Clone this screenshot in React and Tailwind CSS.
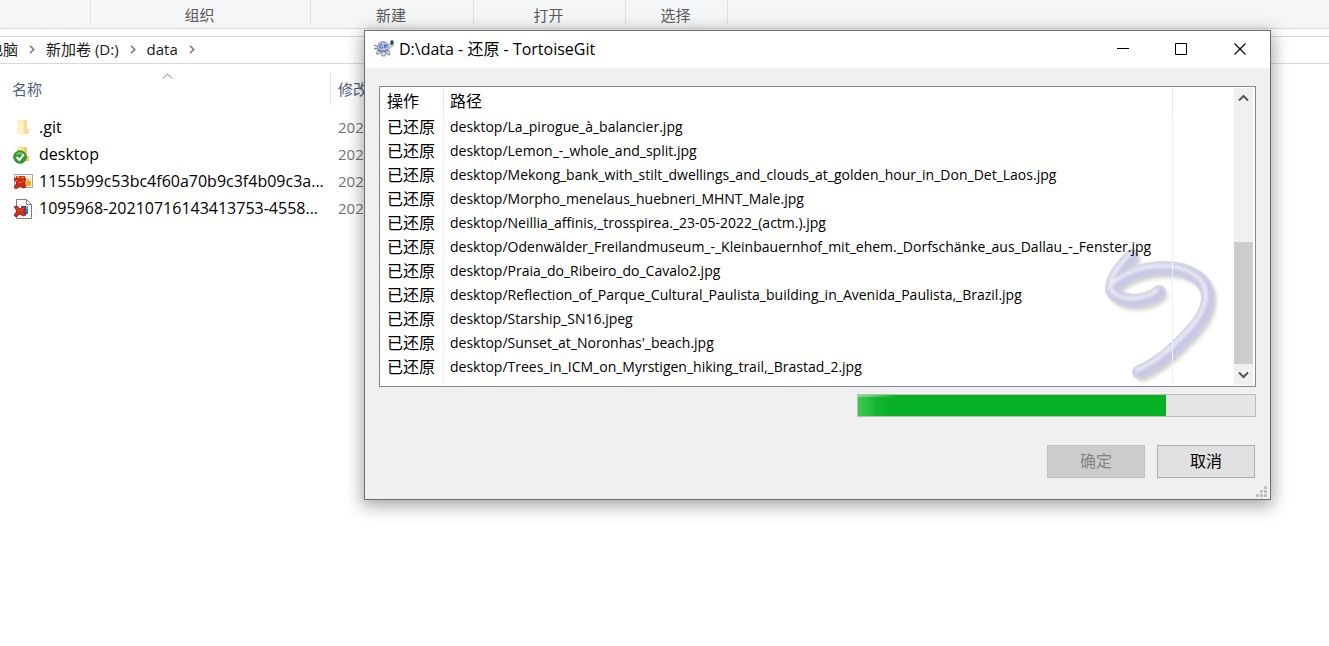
import React from "react";

const PATHS = [
  "desktop/La_pirogue_à_balancier.jpg",
  "desktop/Lemon_-_whole_and_split.jpg",
  "desktop/Mekong_bank_with_stilt_dwellings_and_clouds_at_golden_hour_in_Don_Det_Laos.jpg",
  "desktop/Morpho_menelaus_huebneri_MHNT_Male.jpg",
  "desktop/Neillia_affinis,_trosspirea._23-05-2022_(actm.).jpg",
  "desktop/Odenwälder_Freilandmuseum_-_Kleinbauernhof_mit_ehem._Dorfschänke_aus_Dallau_-_Fenster.jpg",
  "desktop/Praia_do_Ribeiro_do_Cavalo2.jpg",
  "desktop/Reflection_of_Parque_Cultural_Paulista_building_in_Avenida_Paulista,_Brazil.jpg",
  "desktop/Starship_SN16.jpeg",
  "desktop/Sunset_at_Noronhas'_beach.jpg",
  "desktop/Trees_in_ICM_on_Myrstigen_hiking_trail,_Brastad_2.jpg",
];

function Folder({ faded }) {
  return (
    <g opacity={faded ? 0.6 : 1}>
      <path d="M4 2h7v14H4z" fill="#f7d982" />
      <path d="M11 2h3v9h2v5h-5z" fill="#f3cb62" />
      <path d="M4 2l6 2v14l-6-2z" fill="#ffe9a8" />
    </g>
  );
}

function RedCross() {
  return (
    <g>
      <path d="M1 7l3-1 3 3 4-3 2 1-2 4 2 4-3 1-3-2-4 3-2-2 3-4z" fill="#d02a14" stroke="#9a170b" strokeWidth="0.8" />
      <path d="M3 8l4 3 4-3" fill="none" stroke="#ee6a4a" strokeWidth="0.8" />
    </g>
  );
}

function FileIcon({ kind }) {
  return (
    <svg width="20" height="20" viewBox="0 0 20 20" className="shrink-0" aria-hidden="true">
      {kind === "folder" && <Folder faded />}
      {kind === "synced" && (
        <g>
          <Folder />
          <circle cx="7" cy="12" r="6.3" fill="#2f9e31" stroke="#1f7d22" strokeWidth="0.8" />
          <path d="M2.500 10a5 5 0 0 1 9 0q-4.500-1.500-9 0z" fill="#7ccb72" />
          <path d="M3.500 12l2.800 3 4.500-5.500" fill="none" stroke="#fff" strokeWidth="2" />
        </g>
      )}
      {kind === "picture" && (
        <g>
          <path d="M1.500 2.500h18v13h-18z" fill="#fff" stroke="#a3a3a3" />
          <path d="M3 4h9v10H3z" fill="#e0341c" />
          <path d="M4 4h2v2H4zM9 5h2v2H9z" fill="#f7a13a" />
          <path d="M12 4h6v10h-6z" fill="#f9e8d2" />
          <path d="M12 14V8l1.500 2L15 6l1.500 4L18 8v6z" fill="#f5a80f" />
          <RedCross />
        </g>
      )}
      {kind === "document" && (
        <g>
          <path d="M3.500 .500h10l5 5v14h-15z" fill="#fff" stroke="#808080" />
          <path d="M13.500 .500v5h5" fill="none" stroke="#808080" />
          <path d="M8 7h7v8H8z" fill="#1b74d0" />
          <path d="M10 7h5v4z" fill="#63b3f0" />
          <g transform="translate(0 1)">
            <RedCross />
          </g>
        </g>
      )}
    </svg>
  );
}

function Tortoise() {
  return (
    <svg width="20" height="18" viewBox="0 0 20 18" className="shrink-0" aria-hidden="true">
      <path d="M0 5l5 2M0 8.500h5" stroke="#7d8795" strokeWidth="1.300" fill="none" />
      <path d="M4 10l-2 4h3l2-2 1 4h3l1-4 2 3h2l-1-5z" fill="#d3d5d9" stroke="#7b7f86" strokeWidth="0.800" />
      <ellipse cx="9" cy="6.500" rx="5.200" ry="5" fill="#a9bdf0" stroke="#8796c0" />
      <path d="M8 4.500H6.500L5.500 6l1 2h2V6.500M10.500 4.500V8M12 4v4M11 5.500h2.500" stroke="#4c64a6" strokeWidth="0.900" fill="none" />
      <path d="M4 10q5 3 10 0" stroke="#687184" strokeWidth="1.200" fill="none" />
      <path d="M14 5l2-2 3 1v2l-4 3z" fill="#c6ccd4" stroke="#8b929c" strokeWidth="0.500" />
      <path d="M16.500 .500H19.500v4h-3z" fill="#12435f" />
    </svg>
  );
}

function Crumb() {
  return (
    <svg width="6" height="9" viewBox="0 0 6 9" fill="none" stroke="#7a7a7a" strokeWidth="1.600" aria-hidden="true">
      <path d="M1 .800l3.700 3.700L1 8.200" />
    </svg>
  );
}

function RevertArrow() {
  return (
    <svg
      className="pointer-events-none absolute right-9 bottom-0"
      width="120"
      height="144"
      viewBox="0 0 120 144"
      fill="none"
      strokeLinecap="round"
      strokeLinejoin="round"
      aria-hidden="true"
    >
      <defs>
        <filter id="soft" x="-20%" y="-20%" width="140%" height="140%">
          <feGaussianBlur stdDeviation="2" />
        </filter>
        <filter id="shine" x="-20%" y="-20%" width="140%" height="140%">
          <feGaussianBlur stdDeviation="1.400" />
        </filter>
        <path
          id="revert-shape"
          d="M33 14C22 25 14 35 13 46C22 35 42 26 66 26C90 26 109 38 109 55C109 72 96 86 82 100C70 112 56 124 40 130M13 48C18 58 32 60 42 58Q54 56 60 50"
        />
      </defs>
      <use href="#revert-shape" transform="translate(3 4)" stroke="#cfcfca" strokeWidth="11" filter="url(#soft)" />
      <use href="#revert-shape" stroke="#d4d4ea" strokeWidth="14" />
      <use href="#revert-shape" transform="translate(1 1)" stroke="#c8c8e3" strokeWidth="10" filter="url(#shine)" />
      <use href="#revert-shape" transform="translate(-2 -2)" stroke="#f1f1f8" strokeWidth="3" filter="url(#shine)" />
    </svg>
  );
}

function RibbonGroup({ className, children }) {
  return (
    <div className={`flex h-6 shrink-0 items-center justify-center border-r border-[#e0e1e2] pt-1.5 pr-0.5 ${className}`}>
      {children}
    </div>
  );
}

function FileRow({ kind, name }) {
  return (
    <tr className="h-[27px]">
      <td className="p-0">
        <div className="flex items-center gap-1.5 pl-[13px]">
          <FileIcon kind={kind} />
          <span className="pb-0.5 text-base leading-5 whitespace-nowrap">{name}</span>
        </div>
      </td>
      <td className="p-0 pb-0.5 pl-[7px] text-[#757575]">202</td>
    </tr>
  );
}

function Explorer() {
  return (
    <div className="min-w-full">
      <div className="flex h-[29px] border-b border-[#dadbdc] bg-[#f5f6f7] text-[15px] leading-5 text-[#5a5a5a]">
        <RibbonGroup className="w-[91px]" />
        <RibbonGroup className="w-[220px]">组织</RibbonGroup>
        <RibbonGroup className="w-[163px]">新建</RibbonGroup>
        <RibbonGroup className="w-[152px]">打开</RibbonGroup>
        <RibbonGroup className="w-[102px]">选择</RibbonGroup>
      </div>
      <nav className="mt-[7px] flex h-7 items-center gap-[11px] overflow-hidden border-y border-[#d9d9d9] pb-0.5 text-[15px] leading-5 whitespace-nowrap text-[#1a1a1a]">
        <a href="#pc" className="-ml-3">电脑</a>
        <Crumb />
        <a href="#drive">新加卷 (D:)</a>
        <Crumb />
        <a href="#data">data</a>
        <Crumb />
      </nav>
      <table className="w-full table-fixed border-separate border-spacing-0 text-left text-[15px] leading-5">
        <thead>
          <tr className="h-[50px] text-[#4c607a]">
            <th className="w-[331px] p-0 font-normal">
              <div className="relative flex h-8 items-center border-r border-[#e0e0e0] pl-3">
                名称
                <svg className="absolute top-0 left-[162px]" width="11" height="7" viewBox="0 0 11 7" fill="none" stroke="#777" aria-hidden="true">
                  <path d="M1 5.500L5.500 1 10 5.500" />
                </svg>
              </div>
            </th>
            <th className="p-0 pl-[7px] font-normal">修改</th>
          </tr>
        </thead>
        <tbody>
          <FileRow kind="folder" name=".git" />
          <FileRow kind="synced" name="desktop" />
          <FileRow kind="picture" name="1155b99c53bc4f60a70b9c3f4b09c3a..." />
          <FileRow kind="document" name="1095968-20210716143413753-4558..." />
        </tbody>
      </table>
    </div>
  );
}

function ScrollBar() {
  return (
    <div className="mt-px mr-0.5 mb-px flex w-[19px] shrink-0 flex-col bg-[#f0f0f0]">
      <button aria-label="Scroll up" className="flex h-5 items-center justify-center">
        <svg width="11" height="8" viewBox="0 0 11 8" fill="none" stroke="#555" strokeWidth="2" aria-hidden="true">
          <path d="M1 6.500L5.500 2 10 6.500" />
        </svg>
      </button>
      <div className="flex-1" />
      <div className="h-[122px] bg-[#cdcdcd]" />
      <button aria-label="Scroll down" className="flex h-[21px] items-center justify-center">
        <svg width="11" height="8" viewBox="0 0 11 8" fill="none" stroke="#555" strokeWidth="2" aria-hidden="true">
          <path d="M1 1.500L5.500 6 10 1.500" />
        </svg>
      </button>
    </div>
  );
}

function Dialog() {
  return (
    <section
      role="dialog"
      aria-labelledby="dialog-title"
      className="absolute top-[30px] right-[58px] left-[364px] border border-[#6d6d6d] bg-[#f0f0f0] text-black shadow-[0_4px_16px_2px_rgba(0,0,0,0.35)]"
    >
      <header className="flex h-[37px] items-center bg-white pb-0.5 pl-[9px]">
        <Tortoise />
        <h1 id="dialog-title" className="ml-[5px] flex-1 text-base leading-5">D:\data - 还原 - TortoiseGit</h1>
        <button aria-label="Minimize" className="flex h-full w-[58px] items-center justify-center">
          <svg width="12" height="12" viewBox="0 0 12 12" shapeRendering="crispEdges" aria-hidden="true">
            <path d="M0 5.500h12" stroke="#000" />
          </svg>
        </button>
        <button aria-label="Maximize" className="flex h-full w-[58px] items-center justify-center">
          <svg width="12" height="12" viewBox="0 0 12 12" aria-hidden="true">
            <path d="M.500 .500h11v11H.500z" fill="none" stroke="#000" />
          </svg>
        </button>
        <button aria-label="Close" className="flex h-full w-[60px] items-center justify-center">
          <svg width="12" height="12" viewBox="0 0 12 12" aria-hidden="true">
            <path d="M.500 .500l11 11M11.500 .500l-11 11" stroke="#000" strokeWidth="1.100" />
          </svg>
        </button>
      </header>
      <div className="px-3.5 pt-[18px] pb-[21px]">
        <div className="relative flex h-[301px] border border-[#828790] bg-white">
          <RevertArrow />
          <div className="relative min-w-0 flex-1 pt-px">
            <table className="h-[297px] w-full table-fixed border-separate border-spacing-0 text-left">
              <thead>
                <tr className="h-[27px] text-base leading-6">
                  <th className="w-16 border-r border-[#e5e5e5] p-0 pb-0.5 pl-[7px] font-normal">操作</th>
                  <th className="border-r border-[#e5e5e5] p-0 pb-0.5 pl-1.5 font-normal">路径</th>
                  <th className="w-[61px] p-0" aria-label="Empty" />
                </tr>
              </thead>
              <tbody>
                {PATHS.map((path) => (
                  <tr key={path} className="h-6">
                    <td className="border-r border-[#e9f2fd] p-0 pl-[7px] text-base leading-6 whitespace-nowrap">已还原</td>
                    <td className="border-r border-[#e9f2fd] p-0 pl-1.5 text-sm leading-6 whitespace-nowrap">{path}</td>
                    <td className="p-0" />
                  </tr>
                ))}
                <tr>
                  <td className="border-r border-[#e9f2fd] p-0" />
                  <td className="border-r border-[#e9f2fd] p-0" />
                  <td className="p-0" />
                </tr>
              </tbody>
            </table>
          </div>
          <ScrollBar />
        </div>
        <div
          role="progressbar"
          aria-label="Progress"
          aria-valuenow={78}
          aria-valuemin={0}
          aria-valuemax={100}
          className="mt-[7px] ml-auto h-[23px] w-[399px] border border-[#bcbcbc] bg-[#e6e6e6]"
        >
          <div className="h-full bg-linear-to-r from-[#3cc950] via-[#12b52f] via-6% to-[#06b025] to-12%" style={{ width: "77.6%" }}>
            <div className="h-0.5 w-9 bg-linear-to-r from-[#7fe389] to-[#06b025]" />
          </div>
        </div>
        <div className="mt-7 flex justify-end gap-3 pr-px text-base leading-6">
          <button disabled className="h-[33px] w-[98px] border border-[#bfbfbf] bg-[#cccccc] pb-0.5 text-[#838383]">确定</button>
          <button className="h-[33px] w-[98px] border border-[#adadad] bg-[#e1e1e1] pb-0.5">取消</button>
        </div>
      </div>
      <svg className="absolute right-[3px] bottom-0.5" width="11" height="11" viewBox="0 0 11 11" fill="#bfbfbf" shapeRendering="crispEdges" aria-hidden="true">
        <path d="M8 0h3v3H8zM4 4h3v3H4zM8 4h3v3H8zM0 8h3v3H0zM4 8h3v3H4zM8 8h3v3H8z" />
      </svg>
    </section>
  );
}

export default function App() {
  return (
    <main className="relative min-h-screen overflow-hidden bg-white font-['Open_Sans','Noto_Sans_CJK_SC',sans-serif] text-black">
      <Explorer />
      <Dialog />
    </main>
  );
}
